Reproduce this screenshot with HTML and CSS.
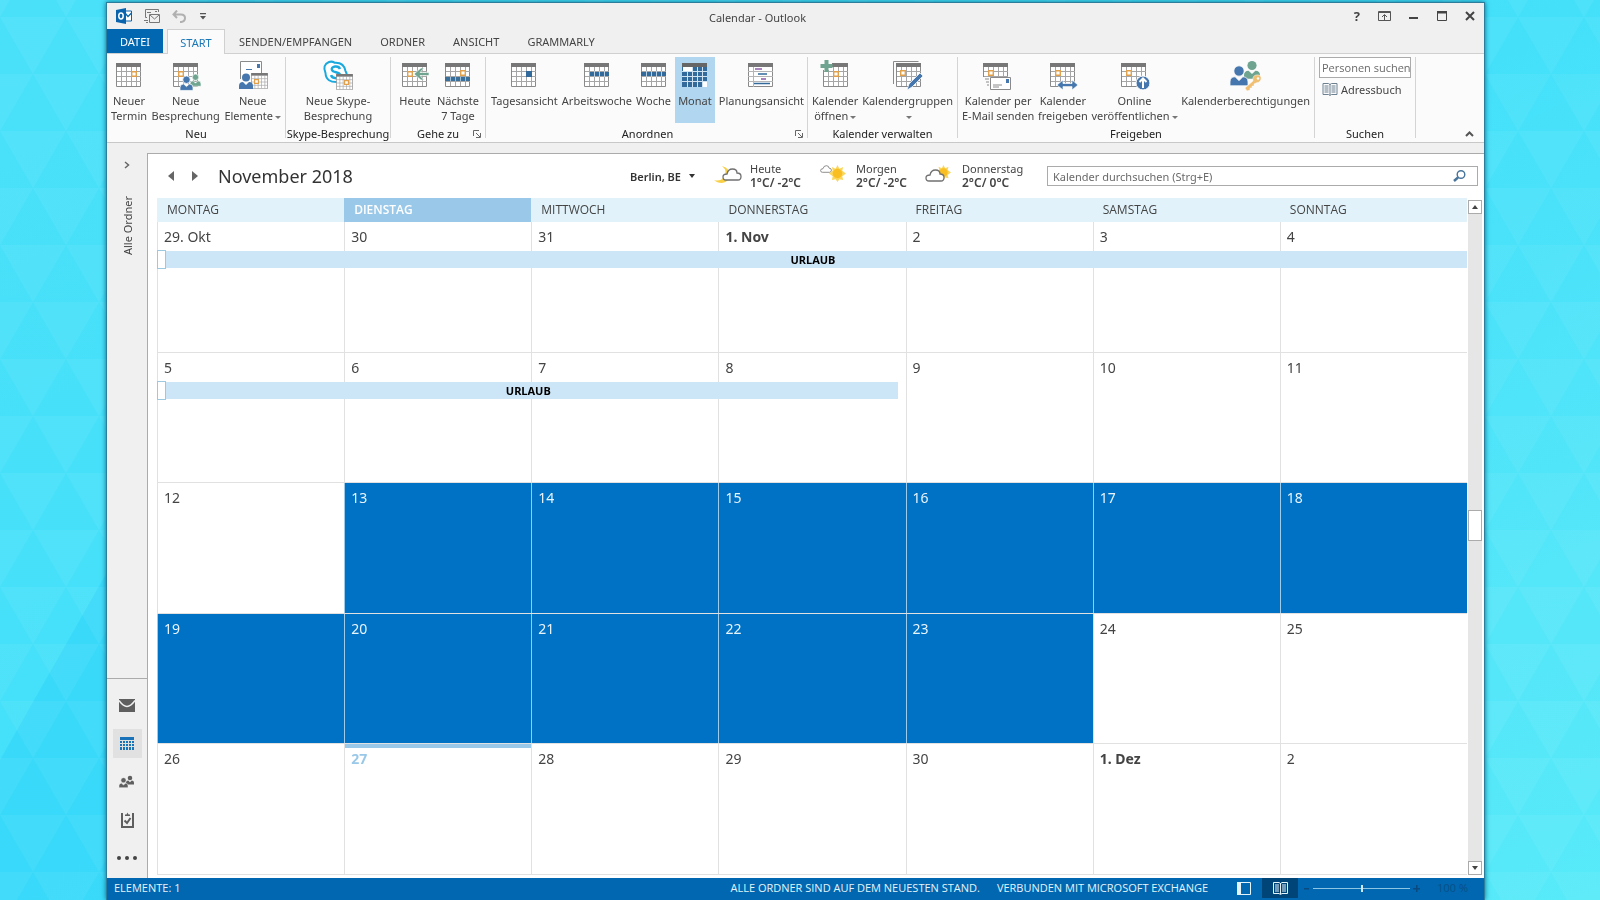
FILE: index.html
```html
<!DOCTYPE html>
<html lang="de">
<head>
<meta charset="utf-8">
<title>Calendar - Outlook</title>
<link rel="stylesheet" href="styles.css">
</head>
<body>
<svg class="backdrop" aria-hidden="true">
  <defs>
    <pattern id="tri" y="17" width="66" height="114" patternUnits="userSpaceOnUse">
      <path d="M0 0H66L33 57ZM-33 57H33L0 114ZM33 57H99L66 114Z" fill="#fff" fill-opacity=".05"/>
    </pattern>
    <linearGradient id="sea" x1="0" x2="1" y1="0" y2="1">
      <stop offset="0" stop-color="#4ae0f9"/>
      <stop offset=".5" stop-color="#44e0fa"/>
      <stop offset=".8" stop-color="#54e6f9"/>
      <stop offset="1" stop-color="#57eaf9"/>
    </linearGradient>
  </defs>
  <rect width="100%" height="100%" fill="url(#sea)"/>
  <path d="M110 567L0 760V900H110Z" fill="#28d0fa" fill-opacity=".4"/>
  <rect width="100%" height="100%" fill="url(#tri)"/>
</svg>

<svg class="defs" aria-hidden="true">
  <defs>
    <symbol id="cal" viewBox="0 0 25 24">
      <path d="M.5 1h24v22.500h-24z" fill="#fff" stroke="#8a8a8a"/>
      <path d="M5.500 4v19M10.500 4v19M15.500 4v19M20.500 4v19M1 8.500h24M1 13.500h24M1 18.500h24" stroke="#a6a6a6" fill="none"/>
      <path d="M0 0h25v4H0z" fill="#777"/>
    </symbol>
    <symbol id="person" viewBox="0 0 14 16">
      <circle cx="7" cy="4.500" r="4"/>
      <path d="M0 16v-3q0-4 4-4l3 3 3-3q4 0 4 4v3z"/>
    </symbol>
    <symbol id="mark" viewBox="0 0 6 6"><path d="M.7.700h4.600v4.600H.7z" fill="#fff" stroke="#e0a04c" stroke-width="1.400"/></symbol>
    <symbol id="cloud" viewBox="0 0 20 13">
      <path d="M4 12q-3 0-3-3t4-3q1-5 5.500-5T15 5q4 0 4 3.500T16 12z" fill="#fff" stroke="#707070" stroke-width="1.300"/>
    </symbol>
    <symbol id="sun" viewBox="0 0 18 18">
      <path d="M9 0l2 4 4-2-1 4 4 3-4 3 1 4-4-1-2 3-2-3-4 1 1-4-4-3 4-3-1-4 4 2z" fill="#fbd65c"/>
      <circle cx="9" cy="9" r="5" fill="#f9bf22"/>
    </symbol>
    <symbol id="launch" viewBox="0 0 8 8"><path d="M.5 6V.500H6M3 3l4 4M7.500 3v4.500H3" fill="none" stroke="#666"/></symbol>
    <symbol id="down" viewBox="0 0 6 4"><path d="M0 0h6L3 4z" fill="currentColor"/></symbol>
    <symbol id="book" viewBox="0 0 15 13">
      <path d="M.5.500h5.500l1.500 1 1.500-1h5.500v11H9l-1.500 1-1.500-1H.5z" fill="none" stroke="currentColor"/>
      <path d="M7.500 1v11M2 3h4M2 5h4M2 7h4M2 9h4M9 3h4M9 5h4M9 7h4M9 9h4" stroke="currentColor" fill="none"/>
    </symbol>
  </defs>
</svg>

<div class="window">
  <header class="titlebar">
    <div class="quick">
      <svg width="16" height="16" viewBox="0 0 16 16"><path d="M9 3h6.500v10H9" fill="#fff" stroke="#0a64ad"/><path d="M9 5l3 3.500L15.500 5" fill="none" stroke="#0a64ad" stroke-width="1.300"/><path d="M0 2l10-2v16L0 14z" fill="#0a64ad"/><ellipse cx="5" cy="8" rx="2.200" ry="2.900" fill="none" stroke="#fff" stroke-width="1.500"/></svg>
      <button class="plain" aria-label="Senden und Empfangen"><svg width="16" height="16" viewBox="0 0 16 16" fill="none" stroke="#777"><path d="M3 9.500H1.500v-8h13V4M11 3.500h2M3 4.500h4M0 12.500h4M2 14.500h2"/><path d="M5.500 6.500h10v8h-10zM6 7l4.500 4L15 7"/></svg></button>
      <button class="plain" aria-label="Rückgängig"><svg width="14" height="13" viewBox="0 0 14 13" fill="none" stroke="#b0b0b0" stroke-width="2"><path d="M5 .500L1.500 4.500 5 8M2 4.500h7q4 0 4 3.500t-4 4H8"/></svg></button>
      <button class="plain more" aria-label="Anpassen"><svg width="6" height="7" viewBox="0 0 6 7"><path d="M0 0h6v1.300H0zM0 3h6L3 6.500z" fill="#555"/></svg></button>
    </div>
    <h1 class="caption">Calendar - Outlook</h1>
    <div class="controls">
      <button class="plain help" aria-label="Hilfe">?</button>
      <button class="plain" aria-label="Menüband-Anzeige"><svg width="13" height="10" viewBox="0 0 13 10" fill="none" stroke="#555"><path d="M.5.500h12v9H.5zM1 1.500h11M6.500 9V4M4 6l2.500-2.500L9 6"/></svg></button>
      <button class="plain" aria-label="Minimieren"><svg width="10" height="10" viewBox="0 0 10 10"><path d="M0 6h9v2H0z" fill="#444"/></svg></button>
      <button class="plain" aria-label="Maximieren"><svg width="10" height="10" viewBox="0 0 10 10"><path d="M.5.500h9v9h-9z" fill="none" stroke="#444"/><path d="M0 0h10v2.500H0z" fill="#444"/></svg></button>
      <button class="plain" aria-label="Schließen"><svg width="10" height="10" viewBox="0 0 10 10"><path d="M1 1l8 8M9 1L1 9" stroke="#444" stroke-width="2"/></svg></button>
    </div>
  </header>

  <nav class="tabs">
    <button class="tab file">DATEI</button>
    <button class="tab active">START</button>
    <button class="tab">SENDEN/EMPFANGEN</button>
    <button class="tab">ORDNER</button>
    <button class="tab">ANSICHT</button>
    <button class="tab">GRAMMARLY</button>
  </nav>

  <section class="ribbon">
    <div class="group g-new">
      <div class="tools">
        <button class="tool"><svg viewBox="0 0 32 30"><use href="#cal" x="3" y="2" width="25" height="24"/><use href="#mark" x="18" y="10" width="6" height="6"/></svg><span>Neuer<br>Termin</span></button>
        <button class="tool"><svg viewBox="0 0 32 30"><use href="#cal" x="3" y="2" width="25" height="24"/><use href="#mark" x="8" y="10" width="6" height="6"/><g stroke="#fbfbfb" stroke-width=".8"><use href="#person" x="20" y="12" width="11" height="14" fill="#6fa590"/><use href="#person" x="10" y="14" width="13" height="16" fill="#4577ae"/></g></svg><span>Neue<br>Besprechung</span></button>
        <button class="tool"><svg viewBox="0 0 32 30"><path d="M3.500 18V.500h21V13" fill="#fff" stroke="#8a8a8a"/><path d="M20 3h3v4h-3zM9 8h6v1H9z" fill="#4577ae"/><use href="#cal" x="14" y="12" width="17" height="16"/><use href="#mark" x="17" y="18" width="5" height="5"/><use href="#person" x="2" y="12" width="14" height="16" fill="#4577ae"/></svg><span>Neue<br>Elemente<i class="arrow"></i></span></button>
      </div>
      <div class="group-name">Neu</div>
    </div>
    <div class="group g-skype">
      <div class="tools">
        <button class="tool"><svg viewBox="0 0 32 30"><path d="M7 1q3-1 5.500.700Q22 1 23.500 10q2 3 1 7-3 6-8 4Q4 22 3.500 12 0 4 7 1z" fill="#fff" stroke="#1ba9dd" stroke-width="2"/><path d="M18 8q-1-3-5-2.500-4 .700-3 3.500.500 1.600 4 2.200 4 .800 4 3-.500 3-4 3-4 0-5-3" fill="none" stroke="#1ba9dd" stroke-width="2.500"/><use href="#cal" x="14" y="13" width="17" height="16"/><use href="#mark" x="22" y="19" width="5" height="5"/></svg><span>Neue Skype-<br>Besprechung</span></button>
      </div>
      <div class="group-name">Skype-Besprechung</div>
    </div>
    <div class="group g-goto">
      <div class="tools">
        <button class="tool"><svg viewBox="0 0 32 30"><use href="#cal" x="3" y="2" width="25" height="24"/><use href="#mark" x="8" y="10" width="6" height="6"/><path d="M15 13l7-6h3l-4 4.500h9v3h-9l4 4.500h-3z" fill="#6fa590" stroke="#fff" stroke-width=".6"/></svg><span>Heute</span></button>
        <button class="tool"><svg viewBox="0 0 32 30"><use href="#cal" x="3" y="2" width="25" height="24"/><use href="#mark" x="18" y="9" width="6" height="6"/><path d="M3 16h25v4H3z" fill="#3a6f99"/><path d="M8.500 16v4M13.500 16v4M18.500 16v4M23.500 16v4" stroke="#9ec0d8"/></svg><span>Nächste<br>7 Tage</span></button>
      </div>
      <div class="group-name">Gehe zu</div>
      <button class="plain launcher" aria-label="Gehe zu: Optionen"><svg width="8" height="8"><use href="#launch"/></svg></button>
    </div>
    <div class="group g-arrange">
      <div class="tools">
        <button class="tool"><svg viewBox="0 0 32 30"><use href="#cal" x="3" y="2" width="25" height="24"/><path d="M18 10h6v6h-6z" fill="#336a9c"/></svg><span>Tagesansicht</span></button>
        <button class="tool"><svg viewBox="0 0 32 30"><use href="#cal" x="3" y="2" width="25" height="24"/><path d="M9 11h19v4H9z" fill="#336a9c"/><path d="M13.500 10v6M18.500 10v6M23.500 10v6" stroke="#b8d0e2"/></svg><span>Arbeitswoche</span></button>
        <button class="tool"><svg viewBox="0 0 32 30"><use href="#cal" x="3" y="2" width="25" height="24"/><path d="M3 11h25v4H3z" fill="#336a9c"/><path d="M8.500 10v6M13.500 10v6M18.500 10v6M23.500 10v6" stroke="#b8d0e2"/></svg><span>Woche</span></button>
        <button class="tool pressed" aria-pressed="true"><svg viewBox="0 0 32 30"><path d="M3 2h25v24H3z" fill="#336a9c"/><path d="M4 6h9v5H4zM24 21h4v5h-4z" fill="#fff"/><path d="M8.500 11v15M13.500 6v20M18.500 6v20M23.500 6v20M3 10.500h25M3 15.500h25M3 20.500h25" stroke="#cfe2f2"/><path d="M3 2h25v4H3z" fill="#666"/></svg><span>Monat</span></button>
        <button class="tool"><svg viewBox="0 0 32 30"><path d="M3.500 3h24v22.500h-24z" fill="#fff" stroke="#8a8a8a"/><path d="M8.500 6v20M3 10.500h25M3 15.500h25M3 20.500h25" stroke="#b5b5b5"/><path d="M3 2h25v4H3z" fill="#777"/><path d="M10 8h7M16 18h5" stroke="#8a5ca8" stroke-width="1.500"/><path d="M13 13h9M9 22.500h16" stroke="#336a9c" stroke-width="1.500"/></svg><span>Planungsansicht</span></button>
      </div>
      <div class="group-name">Anordnen</div>
      <button class="plain launcher" aria-label="Anordnen: Optionen"><svg width="8" height="8"><use href="#launch"/></svg></button>
    </div>
    <div class="group g-manage">
      <div class="tools">
        <button class="tool"><svg viewBox="0 0 32 30"><use href="#cal" x="4" y="2" width="25" height="24"/><use href="#mark" x="14" y="10" width="6" height="6"/><path d="M1 0h12v9H1z" fill="#fbfbfb"/><path d="M5.500-1h4v4h4v4h-4v4h-4V7h-4V3h4z" fill="#6fa590"/></svg><span>Kalender<br>öffnen<i class="arrow"></i></span></button>
        <button class="tool"><svg viewBox="0 0 32 30"><path d="M1.500 23V.500h25" fill="none" stroke="#8a8a8a"/><use href="#cal" x="4" y="2" width="25" height="24"/><use href="#mark" x="8" y="9" width="6" height="6"/><path d="M15 29l2-6L28 12l3 3-11 11z" fill="#4577ae" stroke="#fff" stroke-width=".7"/></svg><span>Kalendergruppen<br><i class="arrow"></i></span></button>
      </div>
      <div class="group-name">Kalender verwalten</div>
    </div>
    <div class="group g-share">
      <div class="tools">
        <button class="tool"><svg viewBox="0 0 32 30"><use href="#cal" x="1" y="2" width="25" height="24"/><use href="#mark" x="6" y="9" width="6" height="6"/><path d="M1 16h31v14H1z" fill="#fbfbfb"/><path d="M8.500 16.500h20v12h-20z" fill="#fff" stroke="#8a8a8a"/><path d="M24 18h3v4h-3z" fill="#4577ae"/><path d="M11 24h9M11 26h6M3 18h4M4 21h3M5 24h2" stroke="#8a8a8a"/></svg><span>Kalender per<br>E-Mail senden</span></button>
        <button class="tool"><svg viewBox="0 0 32 30"><use href="#cal" x="3" y="2" width="25" height="24"/><use href="#mark" x="8" y="9" width="6" height="6"/><path d="M10 24l6-5v3.500h9V19l6 5-6 5v-3.500h-9V29z" fill="#4577ae" stroke="#fff" stroke-width=".7"/></svg><span>Kalender<br>freigeben</span></button>
        <button class="tool"><svg viewBox="0 0 32 30"><use href="#cal" x="2" y="2" width="25" height="24"/><use href="#mark" x="7" y="9" width="6" height="6"/><circle cx="24" cy="22" r="7" fill="#4577ae" stroke="#fff"/><path d="M24 27v-9M20.500 21l3.500-3.500 3.500 3.500" fill="none" stroke="#fff" stroke-width="2"/></svg><span>Online<br>veröffentlichen<i class="arrow"></i></span></button>
        <button class="tool"><svg viewBox="0 0 32 30"><use href="#person" x="14" y="-1" width="16" height="19" fill="#6fa590"/><use href="#person" x="0" y="4" width="18" height="21" fill="#4577ae" stroke="#fbfbfb" stroke-width=".6"/><path d="M15 27l8-7q-1-5 3-6t5 2q1 5-5 6l-2 1v2h-2v2h-2v2l-3 1z" fill="#f0bf72" stroke="#fbfbfb" stroke-width=".5"/><circle cx="28" cy="17.500" r="1.200" fill="#fff"/></svg><span>Kalenderberechtigungen</span></button>
      </div>
      <div class="group-name">Freigeben</div>
    </div>
    <div class="group g-find">
      <div class="find">
        <input class="people" type="text" placeholder="Personen suchen" aria-label="Personen suchen">
        <button class="plain address"><svg width="16" height="13"><use href="#book"/></svg>Adressbuch</button>
      </div>
      <div class="group-name">Suchen</div>
    </div>
    <button class="plain collapse" aria-label="Menüband reduzieren"><svg width="9" height="6" viewBox="0 0 9 6"><path d="M1 5l3.500-3.500L8 5" fill="none" stroke="#555" stroke-width="2"/></svg></button>
  </section>

  <div class="body">
    <aside class="rail">
      <div class="folders">
        <button class="plain" aria-label="Ordnerbereich erweitern"><svg width="6" height="8" viewBox="0 0 6 8"><path d="M1 1l3.500 3L1 7" fill="none" stroke="#666" stroke-width="1.500"/></svg></button>
        <span class="vertical">Alle Ordner</span>
      </div>
      <nav class="modules">
        <button class="plain" aria-label="E-Mail"><svg width="16" height="13" viewBox="0 0 16 13"><path d="M0 0h16v13H0z" fill="#5f5f5f"/><path d="M0 1.500q8 12 16 0" fill="none" stroke="#f0f0f0" stroke-width="1.500"/></svg></button>
        <button class="plain current" aria-label="Kalender"><svg width="14" height="13" viewBox="0 0 14 13"><path d="M0 0h14v13H0z" fill="#1a73b8"/><path d="M0 3.500h14M0 6.500h14M0 9.500h14M2.500 3v10M5.500 3v10M8.500 3v10M11.500 3v10" stroke="#e1e1e1"/></svg></button>
        <button class="plain" aria-label="Personen"><svg width="16" height="13" viewBox="0 0 16 13" fill="#5f5f5f"><use href="#person" x="7" y="0" width="8" height="10"/><use href="#person" x="0" y="2" width="9" height="11" stroke="#f0f0f0" stroke-width=".8"/></svg></button>
        <button class="plain" aria-label="Aufgaben"><svg width="13" height="16" viewBox="0 0 13 16" fill="none" stroke="#5f5f5f" stroke-width="2"><path d="M2 2H1v13h11V2h-1M3.500 8.500L6 11l3.500-5"/><path d="M4 4V2.500h1.500L6.500.500 7.500 2.500h1.500V4z" fill="#5f5f5f" stroke="none"/></svg></button>
        <button class="plain" aria-label="Mehr"><svg width="20" height="4" viewBox="0 0 20 4" fill="#444"><circle cx="2" cy="2" r="2"/><circle cx="10" cy="2" r="2"/><circle cx="18" cy="2" r="2"/></svg></button>
      </nav>
    </aside>

    <main class="main">
      <div class="toolbar">
        <button class="plain" aria-label="Zurück"><svg width="6" height="10" viewBox="0 0 6 10"><path d="M6 0v10L0 5z" fill="#666"/></svg></button>
        <button class="plain" aria-label="Weiter"><svg width="6" height="10" viewBox="0 0 6 10"><path d="M0 0v10l6-5z" fill="#666"/></svg></button>
        <h2 class="month">November 2018</h2>
        <button class="plain place">Berlin, BE <svg width="6" height="4"><use href="#down"/></svg></button>
        <div class="weather">
          <div class="forecast"><svg width="30" height="20" viewBox="0 0 30 20"><path d="M9 1q6 5 2 11-4 5-10 3 3 3 8 3 8-1 8-9-1-6-8-8z" fill="#f8cf45"/><use href="#cloud" x="9" y="3" width="20" height="13"/></svg><p>Heute<br><b>1°C/ -2°C</b></p></div>
          <div class="forecast"><svg width="30" height="20" viewBox="0 0 30 20"><use href="#cloud" x="1" y="0" width="12" height="8"/><use href="#sun" x="10" y="0" width="17" height="17"/></svg><p>Morgen<br><b>2°C/ -2°C</b></p></div>
          <div class="forecast"><svg width="30" height="20" viewBox="0 0 30 20"><use href="#sun" x="11" y="0" width="15" height="15"/><use href="#cloud" x="0" y="4" width="20" height="13"/></svg><p>Donnerstag<br><b>2°C/ 0°C</b></p></div>
        </div>
        <div class="search">
          <input type="text" placeholder="Kalender durchsuchen (Strg+E)" aria-label="Kalender durchsuchen">
          <svg width="13" height="12" viewBox="0 0 13 12" fill="none" stroke="#46749c"><circle cx="8" cy="4.500" r="3.800" stroke-width="1.400"/><path d="M5 7.500L1 11" stroke-width="2.400"/></svg>
        </div>
      </div>
      <div class="sheet">
        <div class="calendar">
          <div class="days">
            <div>MONTAG</div><div class="today">DIENSTAG</div><div>MITTWOCH</div><div>DONNERSTAG</div><div>FREITAG</div><div>SAMSTAG</div><div>SONNTAG</div>
          </div>
          <div class="week">
            <div class="day">29. Okt</div><div class="day">30</div><div class="day">31</div><div class="day first">1. Nov</div><div class="day">2</div><div class="day">3</div><div class="day">4</div>
            <div class="event whole">URLAUB</div>
          </div>
          <div class="week">
            <div class="day">5</div><div class="day">6</div><div class="day">7</div><div class="day">8</div><div class="day">9</div><div class="day">10</div><div class="day">11</div>
            <div class="event half">URLAUB</div>
          </div>
          <div class="week">
            <div class="day">12</div><div class="day sel">13</div><div class="day sel">14</div><div class="day sel">15</div><div class="day sel">16</div><div class="day sel">17</div><div class="day sel">18</div>
          </div>
          <div class="week">
            <div class="day sel">19</div><div class="day sel">20</div><div class="day sel">21</div><div class="day sel">22</div><div class="day sel">23</div><div class="day">24</div><div class="day">25</div>
          </div>
          <div class="week">
            <div class="day">26</div><div class="day now">27</div><div class="day">28</div><div class="day">29</div><div class="day">30</div><div class="day first">1. Dez</div><div class="day">2</div>
          </div>
        </div>
        <div class="scroll">
          <button class="plain" aria-label="Nach oben"><svg class="up" width="6" height="4"><use href="#down"/></svg></button>
          <div class="track"><div class="thumb"></div></div>
          <button class="plain" aria-label="Nach unten"><svg width="6" height="4"><use href="#down"/></svg></button>
        </div>
      </div>
    </main>
  </div>

  <footer class="status">
    <span class="count">ELEMENTE: 1</span>
    <span>ALLE ORDNER SIND AUF DEM NEUESTEN STAND.</span>
    <span>VERBUNDEN MIT MICROSOFT EXCHANGE</span>
    <div class="views">
      <button class="plain" aria-label="Normal"><svg width="14" height="13" viewBox="0 0 14 13"><path d="M.5.500h13v12H.5z" fill="none" stroke="#e4f4fb"/><path d="M0 0h4v13H0z" fill="#e4f4fb"/></svg></button>
      <button class="plain on" aria-label="Lesen"><svg width="15" height="13"><use href="#book"/></svg></button>
    </div>
    <div class="zoom">
      <button class="plain" aria-label="Verkleinern"><svg width="7" height="7" viewBox="0 0 7 7"><path d="M1 3h5v1.500H1z" fill="#0a4a80"/></svg></button>
      <input type="range" min="0" max="100" value="50" aria-label="Zoom">
      <button class="plain" aria-label="Vergrößern"><svg width="7" height="7" viewBox="0 0 7 7"><path d="M3 0h1.500v3H7v1.500H4.500V7H3V4.500H0V3h3z" fill="#0a4a80"/></svg></button>
    </div>
    <span class="percent">100 %</span>
  </footer>
</div>
</body>
</html>
```
FILE: styles.css
```css
* { box-sizing: border-box; }
body {
  margin: 0;
  min-height: 100vh;
  display: flex;
  background: #46dff9;
  color: #444;
  font: 11px/15px "Noto Sans", "Open Sans", sans-serif;
}
button, input { font: inherit; color: inherit; }
h1, h2, p { margin: 0; font-weight: 400; }
.plain { padding: 0; border: 0; background: none; display: flex; align-items: center; justify-content: center; }
.backdrop { position: fixed; inset: 0; width: 100%; height: 100%; z-index: -1; }
.defs { position: absolute; width: 0; height: 0; }

.window {
  flex: 1;
  min-width: 0;
  display: flex;
  flex-direction: column;
  margin: 2px 115px 0 106px;
  border: 1px solid #2b7f9c;
  border-bottom: 0;
  background: #f0f0f0;
  box-shadow: 0 0 5px #0a6a8a;
}

.titlebar { display: grid; grid-template-columns: 1fr auto 1fr; align-items: center; height: 26px; padding: 0 9px; }
.quick { display: flex; align-items: center; gap: 12px; }
.quick .more { margin-left: 2px; }
.caption { font-size: 11px; padding: 3px 76px 0 0; }
.controls { display: flex; justify-content: flex-end; align-items: center; gap: 18px; }
.help { font-size: 13px; font-weight: 700; }

.tabs { display: flex; height: 25px; border-bottom: 1px solid #d0d0d0; }
.tab { height: 25px; padding: 0 14px; border: 0; background: none; white-space: nowrap; }
.tab.file { width: 56px; height: 24px; padding: 0; margin-right: 4px; background: #0067b0; color: #fff; }
.tab.active { width: 58px; padding: 0; border: 1px solid #d0d0d0; border-bottom: 0; background: #fbfbfb; color: #1a78b8; }

.ribbon { position: relative; display: flex; height: 89px; padding: 3px 0 4px; background: #fbfbfb; border-bottom: 1px solid #c8c8c8; }
.group { position: relative; display: flex; flex-direction: column; padding: 0 4px; border-right: 1px solid #d4d4d4; }
.g-new { width: 179px; }
.g-skype { width: 105px; }
.g-goto { width: 95px; }
.g-arrange { width: 322px; padding: 0 3px 0 5px; }
.g-manage { width: 150px; }
.g-share { width: 357px; }
.g-find { width: 101px; }
.tools { display: flex; justify-content: space-between; height: 66px; }
.g-skype .tools { justify-content: center; }
.g-goto .tools { padding: 0 2px 0 4px; }
.tool { display: flex; flex-direction: column; align-items: center; gap: 2px; padding: 4px 0 0; border: 0; background: none; white-space: nowrap; }
.tool svg { width: 32px; height: 30px; overflow: visible; }
.tool.pressed { padding: 4px 3px 0; background: #b1d6f0; }
.arrow { display: inline-block; margin-left: 2px; border: 3px solid transparent; border-top-color: #777; border-bottom: 0; vertical-align: middle; }
.group-name { margin-top: auto; display: flex; justify-content: center; line-height: 8px; color: #222; white-space: nowrap; }
.launcher { position: absolute; right: 4px; bottom: 0; }
.find { display: flex; flex-direction: column; gap: 4px; }
.people { width: 100%; height: 21px; padding: 0 0 0 2px; border: 1px solid #ababab; background: #fff; font-family: "Open Sans", sans-serif; }
.address { align-self: flex-start; gap: 3px; margin-left: 3px; }
.address svg { color: #6d8090; }
input::placeholder { color: #6a6a6a; opacity: 1; }
.collapse { position: absolute; right: 10px; bottom: 5px; }

.body { flex: 1; min-height: 0; display: flex; }
.rail { width: 40px; display: flex; flex-direction: column; }
.folders { flex: 1; display: flex; flex-direction: column; align-items: center; gap: 27px; padding-top: 18px; }
.vertical { writing-mode: vertical-rl; transform: rotate(180deg); font-size: 11px; }
.modules { display: flex; flex-direction: column; align-items: center; gap: 9px; padding: 12px 0 6px; border-top: 1px solid #ababab; }
.modules button { width: 29px; height: 29px; }
.modules .current { background: #e1e1e1; }

.main { flex: 1; min-width: 0; display: flex; flex-direction: column; margin-top: 10px; padding: 0 0 3px 9px; background: #fff; border: 1px solid #ababab; border-width: 1px 0 0 1px; }
.toolbar { display: flex; align-items: center; height: 44px; padding: 0 6px 0 11px; }
.toolbar > .plain + .plain { margin-left: 18px; }
.month { margin-left: 20px; font-size: 18px; line-height: 24px; color: #333; white-space: nowrap; flex: 1; }
.toolbar .place { gap: 8px; font-weight: 600; white-space: nowrap; color: #333; }
.weather { display: flex; margin-left: 18px; gap: 14px; }
.forecast { display: flex; gap: 7px; line-height: 14px; white-space: nowrap; width: 92px; }
.forecast svg { flex: none; margin-top: 3px; }
.forecast b { font-weight: 600; font-size: 12px; }
.search { flex: 0 1 431px; display: flex; align-items: center; height: 20px; margin-left: 30px; padding: 0 11px 0 5px; border: 1px solid #ababab; }
.search input { flex: 1; min-width: 0; padding: 0; border: 0; background: none; outline: 0; }

.sheet { flex: 1; min-height: 0; display: flex; }
.calendar { flex: 1; display: flex; flex-direction: column; }
.days { display: grid; grid-template-columns: repeat(7, 1fr); height: 24px; background: #e1f2fa; font: 12px/24px "Open Sans", sans-serif; }
.days div { padding-left: 10px; }
.days .today { background: #9ac8e8; color: #fff; font-weight: 600; }
.week { flex: 1; display: grid; grid-template-columns: repeat(7, 1fr); grid-template-rows: 29px 17px 1fr; border-bottom: 1px solid #e1e1e1; }
.day { grid-row: 1 / -1; padding: 5px 6px; border-left: 1px solid #e1e1e1; font-size: 14px; line-height: 20px; }
.day:nth-child(1) { grid-column: 1; }
.day:nth-child(2) { grid-column: 2; }
.day:nth-child(3) { grid-column: 3; }
.day:nth-child(4) { grid-column: 4; }
.day:nth-child(5) { grid-column: 5; }
.day:nth-child(6) { grid-column: 6; }
.day:nth-child(7) { grid-column: 7; }
.day.first { font-weight: 700; }
.day.sel { background: #0072c6; color: #e8f4fb; border-color: #9ccbeb; }
.day.now { color: #9ac8e8; font-weight: 700; box-shadow: inset 0 4px #9ac8e8; }
.event { grid-row: 2; display: flex; align-items: center; justify-content: center; background: #cde6f7; color: #000; font-weight: 700; }
.event::before { content: ""; width: 7px; height: 17px; margin-right: auto; background: #fff; border: 1px solid #9cc8e0; }
.event::after { content: ""; width: 7px; margin-left: auto; }
.event.whole { grid-column: 1 / 8; }
.event.half { grid-column: 1 / 5; margin-right: 8px; }

.scroll { width: 17px; display: flex; flex-direction: column; padding: 2px 2px 0 1px; }
.scroll button { height: 14px; border: 1px solid #ababab; background: #fff; }
.up { transform: rotate(180deg); }
.track { flex: 1; display: grid; grid-template-rows: 297fr 31px 321fr; background: #e6e6e6; }
.thumb { grid-row: 2; background: #fff; border: 1px solid #ababab; }

.status { display: flex; align-items: center; height: 22px; padding: 0 16px 2px 7px; background: #0067b0; color: #e4f4fb; font: 11px/16px "Open Sans", sans-serif; white-space: nowrap; }
.status span + span { margin-left: 17px; }
.count { flex: 1; }
.views { display: flex; align-self: stretch; margin-left: 18px; }
.views button { width: 36px; }
.views .on { background: #004578; }
.zoom { display: flex; align-items: center; gap: 3px; margin-left: 5px; }
.zoom input { appearance: none; width: 97px; height: 7px; margin: 0; background: linear-gradient(#8cc4e4, #8cc4e4) center / 100% 1px no-repeat; }
.zoom input::-webkit-slider-thumb { appearance: none; width: 2px; height: 7px; background: #cfe8f6; }
.status .percent { margin-left: 17px; color: #0a4f88; }
```
